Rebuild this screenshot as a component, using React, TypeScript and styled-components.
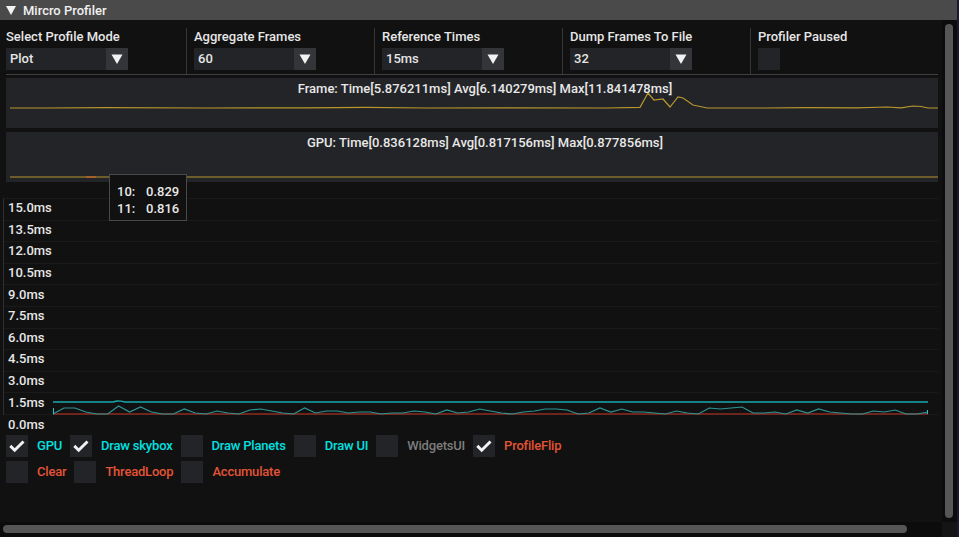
import React from 'react'
import styled, { createGlobalStyle } from 'styled-components'

const GlobalStyle = createGlobalStyle`
  html, body {
    margin: 0;
    padding: 0;
    background: #1b1830;
  }
  body {
    font-family: Roboto, "Noto Sans", sans-serif;
    font-size: 13px;
    font-weight: 500;
    color: #e6e6e6;
  }
`

// heights above the zero line for the GPU series in the big plot
const WAVE = [
  0, 6, 6, 2, 0, 0, 8, 2, 7, 2, 0, 0, 5, 1, 0, 3, 1, 0, 4, 5, 3, 1, 0, 6, 1, 3, 3, 1, 2, 2,
  0, 1, 1, 3, 2, 0, 4, 1, 2, 5, 3, 1, 0, 2, 3, 5, 5, 4, 0, 1, 6, 2, 5, 2, 2, 1, 0, 3, 1, 0,
  6, 5, 6, 7, 1, 1, 2, 0, 4, 1, 5, 2, 1, 0, 0, 3, 2, 4, 0, 0, 2,
]

const TEAL_POINTS = WAVE.map((v, i) => {
  const x = 50 + (875 * i) / (WAVE.length - 1)
  return `${x.toFixed(1)},${216 - v}`
}).join(' ')

const FRAME_POINTS = [
  [4, 30], [40, 30], [100, 29.6], [200, 30], [300, 29.8], [360, 29.4], [420, 30],
  [500, 29.8], [600, 30], [634, 29.3], [642, 15], [648, 22], [657, 21], [664, 29],
  [672, 19], [677, 20], [687, 27], [701, 30], [760, 30], [800, 29.6], [850, 29.8],
  [881, 29], [895, 29.8], [907, 28], [915, 28.5], [922, 30], [932, 30],
].map((p) => p.join(',')).join(' ')

const AXIS = ['15.0ms', '13.5ms', '12.0ms', '10.5ms', '9.0ms', '7.5ms', '6.0ms', '4.5ms', '3.0ms', '1.5ms']

type Item = { label: string; color: string; checked: boolean }

const ROW1: Item[] = [
  { label: 'GPU', color: '#00e0e0', checked: true },
  { label: 'Draw skybox', color: '#00e0e0', checked: true },
  { label: 'Draw Planets', color: '#00e0e0', checked: false },
  { label: 'Draw UI', color: '#00e0e0', checked: false },
  { label: 'WidgetsUI', color: '#7c7c7c', checked: false },
  { label: 'ProfileFlip', color: '#e35436', checked: true },
]

const ROW2: Item[] = [
  { label: 'Clear', color: '#e35436', checked: false },
  { label: 'ThreadLoop', color: '#e35436', checked: false },
  { label: 'Accumulate', color: '#e35436', checked: false },
]

const CheckMark = () => (
  <svg width="22" height="22" viewBox="0 0 22 22">
    <polyline
      points="4.3,10.9 8.7,15.3 17.5,6.5"
      fill="none"
      stroke="#f2f2f2"
      strokeWidth="2.9"
    />
  </svg>
)

const Arrow = () => (
  <svg width="22" height="22" viewBox="0 0 22 22">
    <polygon points="5.5,6.5 16.5,6.5 11,16" fill="#f2f2f2" />
  </svg>
)

const ComboBox = ({ value }: { value: string }) => (
  <Combo>
    <ComboField>{value}</ComboField>
    <ComboButton>
      <Arrow />
    </ComboButton>
  </Combo>
)

const CheckList = ({ items }: { items: Item[] }) => (
  <CheckRow>
    {items.map((it) => (
      <CheckItem key={it.label}>
        <Box>{it.checked && <CheckMark />}</Box>
        <CheckLabel color={it.color}>{it.label}</CheckLabel>
      </CheckItem>
    ))}
  </CheckRow>
)

const App = () => {
  return (
    <>
      <GlobalStyle />
      <Window>
        <TitleBar>
          <svg width="10" height="9" viewBox="0 0 10 9">
            <polygon points="0,0 10,0 5,9" fill="#f2f2f2" />
          </svg>
          <TitleText>Mircro Profiler</TitleText>
        </TitleBar>
        <Middle>
          <Content>
            <Controls>
              <Column first>
                <Label>Select Profile Mode</Label>
                <ComboBox value="Plot" />
              </Column>
              <Column>
                <Label>Aggregate Frames</Label>
                <ComboBox value="60" />
              </Column>
              <Column>
                <Label>Reference Times</Label>
                <ComboBox value="15ms" />
              </Column>
              <Column>
                <Label>Dump Frames To File</Label>
                <ComboBox value="32" />
              </Column>
              <Column>
                <Label>Profiler Paused</Label>
                <Box />
              </Column>
            </Controls>

            <Plot>
              <PlotLines viewBox="0 0 932 50">
                <polyline points={FRAME_POINTS} fill="none" stroke="#b8962e" strokeWidth="1.2" />
              </PlotLines>
              <PlotTitle>Frame: Time[5.876211ms] Avg[6.140279ms] Max[11.841478ms]</PlotTitle>
            </Plot>
            <Plot>
              <PlotLines viewBox="0 0 932 50">
                <polyline points="4,45 932,45" fill="none" stroke="#b8962e" strokeWidth="1.2" />
                <polyline points="80,45 90,45" fill="none" stroke="#c8642a" strokeWidth="1.2" />
              </PlotLines>
              <PlotTitle>GPU: Time[0.836128ms] Avg[0.817156ms] Max[0.877856ms]</PlotTitle>
            </Plot>

            <BigPlot>
              <AxisRows>
                {AXIS.map((a) => (
                  <AxisRow key={a}>{a}</AxisRow>
                ))}
              </AxisRows>
              <LastRow>0.0ms</LastRow>
              <SeriesLayer viewBox="0 0 935 236">
                <polyline points="50,216 925,216" fill="none" stroke="#8c2b20" strokeWidth="1.3" />
                <polyline points={TEAL_POINTS} fill="none" stroke="#2e9494" strokeWidth="1.2" />
                <polyline
                  points="50,204 110,204 114,203 118,203.2 122,204 925,204"
                  fill="none"
                  stroke="#17a8ac"
                  strokeWidth="1.3"
                />
                <polyline points="50.5,210 50.5,216" fill="none" stroke="#19c8cc" strokeWidth="1" />
                <polyline points="924.5,212 924.5,216" fill="none" stroke="#19c8cc" strokeWidth="1" />
              </SeriesLayer>
            </BigPlot>

            <Checks>
              <CheckList items={ROW1} />
              <CheckList items={ROW2} />
            </Checks>

            <Tooltip>
              <span>10:</span>
              <span>0.829</span>
              <span>11:</span>
              <span>0.816</span>
            </Tooltip>
          </Content>
          <VScroll>
            <VThumb />
          </VScroll>
        </Middle>
        <BottomBar>
          <HScroll>
            <HThumb />
          </HScroll>
          <Corner />
        </BottomBar>
      </Window>
    </>
  )
}

export default App

const Window = styled.div`
  width: 957px;
  height: 537px;
  background: #111111;
  display: flex;
  flex-direction: column;
  overflow: hidden;
`
const TitleBar = styled.div`
  height: 20px;
  flex-shrink: 0;
  background: #4a4a4a;
  display: flex;
  align-items: center;
  padding-left: 6px;
  gap: 7px;
`
const TitleText = styled.div`
  font-size: 13px;
  color: #f0f0f0;
`
const Middle = styled.div`
  flex: 1;
  display: flex;
  min-height: 0;
`
const Content = styled.div`
  flex: 1;
  position: relative;
  padding: 8px 4px 0 6px;
  display: flex;
  flex-direction: column;
  overflow: hidden;
`
const Controls = styled.div`
  display: flex;
  border-bottom: 1px solid #3f3f3f;
`
const Column = styled.div<{ first?: boolean }>`
  width: 180px;
  padding-left: ${(p) => (p.first ? '0' : '7px')};
  border-left: ${(p) => (p.first ? 'none' : '1px solid #363636')};
  padding-bottom: 4px;
  display: flex;
  flex-direction: column;
  gap: 4px;
`
const Label = styled.div`
  box-sizing: border-box;
  line-height: 15px;
  height: 16px;
  padding-top: 1px;
  white-space: nowrap;
`
const Combo = styled.div`
  width: 122px;
  height: 22px;
  display: flex;
`
const ComboField = styled.div`
  flex: 1;
  background: #232427;
  padding-left: 4px;
  line-height: 22px;
`
const ComboButton = styled.div`
  width: 22px;
  height: 22px;
  background: #343538;
  display: flex;
`
const Box = styled.div`
  width: 22px;
  height: 22px;
  flex-shrink: 0;
  background: #232427;
  display: flex;
`
const Plot = styled.div`
  position: relative;
  height: 50px;
  margin-top: 3px;
  background: #232427;
  & + & {
    margin-top: 4px;
  }
`
const PlotLines = styled.svg`
  position: absolute;
  left: 0;
  top: 0;
  width: 100%;
  height: 100%;
`
const PlotTitle = styled.div`
  position: relative;
  text-align: center;
  line-height: 16px;
  padding-top: 3px;
  padding-left: 26px;
  color: #e8e8e8;
`
const BigPlot = styled.div`
  position: relative;
  margin-top: 16px;
  margin-left: -3px;
`
const AxisRows = styled.div`
  border-left: 1px solid #2e2e2e;
  border-top: 1px solid #1a1a1a;
`
const AxisRow = styled.div`
  height: 21.6px;
  box-sizing: border-box;
  border-bottom: 1px solid #1a1a1a;
  display: flex;
  align-items: center;
  padding-left: 4px;
  padding-bottom: 3px;
`
const LastRow = styled.div`
  height: 20px;
  display: flex;
  align-items: center;
  padding-left: 5px;
  padding-bottom: 1px;
  box-sizing: border-box;
`
const SeriesLayer = styled.svg`
  position: absolute;
  left: 0;
  top: 0;
  width: 935px;
  height: 236px;
`
const Checks = styled.div`
  display: flex;
  flex-direction: column;
  gap: 4px;
`
const CheckRow = styled.div`
  display: flex;
  gap: 8px;
`
const CheckItem = styled.div`
  display: flex;
  align-items: center;
  gap: 9px;
`
const CheckLabel = styled.div<{ color: string }>`
  color: ${(p) => p.color};
  white-space: nowrap;
  letter-spacing: -0.2px;
`
const Tooltip = styled.div`
  position: absolute;
  left: 109px;
  top: 154px;
  width: 78px;
  height: 47px;
  box-sizing: border-box;
  border: 1px solid #4a4a4a;
  background: #111111;
  padding: 9px 7px 2px;
  display: grid;
  grid-template-columns: 29px auto;
  line-height: 16px;
  color: #e8e8e8;
`
const VScroll = styled.div`
  width: 15px;
  background: #0c0c0c;
  display: flex;
  padding: 4px 4px 4px 3px;
  box-sizing: border-box;
`
const VThumb = styled.div`
  flex: 1;
  background: #565656;
  border-radius: 4px;
`
const BottomBar = styled.div`
  height: 15px;
  flex-shrink: 0;
  display: flex;
`
const HScroll = styled.div`
  flex: 1;
  background: #0c0c0c;
  padding: 3px 0 4px 3px;
  box-sizing: border-box;
  display: flex;
`
const HThumb = styled.div`
  width: 904px;
  background: #565656;
  border-radius: 4px;
`
const Corner = styled.div`
  width: 15px;
  background: #141414;
`
